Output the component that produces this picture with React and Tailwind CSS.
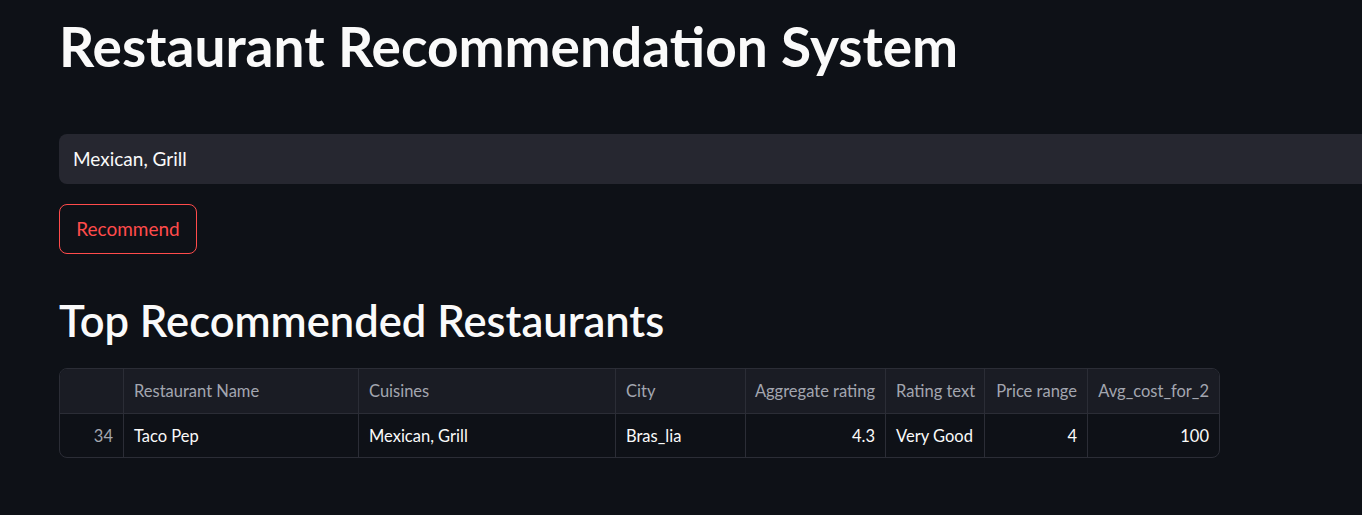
import React from 'react'

const columns = [
  { key: 'idx', label: '', w: 'w-[64px]', right: true },
  { key: 'name', label: 'Restaurant Name', w: 'w-[235px]' },
  { key: 'cuisines', label: 'Cuisines', w: 'w-[257px]' },
  { key: 'city', label: 'City', w: 'w-[130px]' },
  { key: 'rating', label: 'Aggregate rating', w: 'w-[140px]', right: true },
  { key: 'text', label: 'Rating text', w: 'w-[99px]' },
  { key: 'price', label: 'Price range', w: 'w-[103px]', right: true },
  { key: 'cost', label: 'Avg_cost_for_2', w: 'w-[131px]', right: true },
]

const rows = [
  { idx: '34', name: 'Taco Pep', cuisines: 'Mexican, Grill', city: 'Bras_lia', rating: '4.3', text: 'Very Good', price: '4', cost: '100' },
]

const App = () => {
  return (
    <div className="min-h-screen w-full bg-[#0e1117] font-['Lato','Noto_Sans',sans-serif] text-[#fafafa] overflow-hidden">
      <div className="pl-[59px] pt-[12px]">
        <h1 className="text-[55px] font-bold leading-[68px]">Restaurant Recommendation System</h1>

        <div className="mt-[54px] h-[50px] w-[1400px] rounded-lg bg-[#262730] flex items-center px-[14px]">
          <span className="text-[19px]">Mexican, Grill</span>
        </div>

        <button className="mt-[20px] h-[50px] w-[138px] rounded-lg border border-[#ff4b4b] text-[#ff4b4b] text-[19px] bg-transparent">
          Recommend
        </button>

        <h2 className="mt-[38px] text-[43.5px] font-semibold leading-[56px]">Top Recommended Restaurants</h2>

        <div className="mt-[20px] inline-block rounded-lg border border-[#2b2d36] overflow-hidden text-[16.5px]">
          <div className="flex bg-[#1a1c24] border-b border-[#2b2d36] h-[45px]">
            {columns.map((c, i) => (
              <div
                key={c.key}
                className={`${c.w} shrink-0 flex items-center px-[10px] whitespace-nowrap text-[#a3a6b0] ${c.right ? 'justify-end' : ''} ${i < columns.length - 1 ? 'border-r border-[#2b2d36]' : ''}`}
              >
                {c.label}
              </div>
            ))}
          </div>
          {rows.map(r => (
            <div key={r.idx} className="flex h-[43px]">
              {columns.map((c, i) => (
                <div
                  key={c.key}
                  className={`${c.w} shrink-0 flex items-center px-[10px] pt-[1px] whitespace-nowrap ${c.key === 'idx' ? 'text-[#a3a6b0]' : ''} ${c.right ? 'justify-end' : ''} ${i < columns.length - 1 ? 'border-r border-[#2b2d36]' : ''}`}
                >
                  {r[c.key]}
                </div>
              ))}
            </div>
          ))}
        </div>
      </div>
    </div>
  )
}

export default App
